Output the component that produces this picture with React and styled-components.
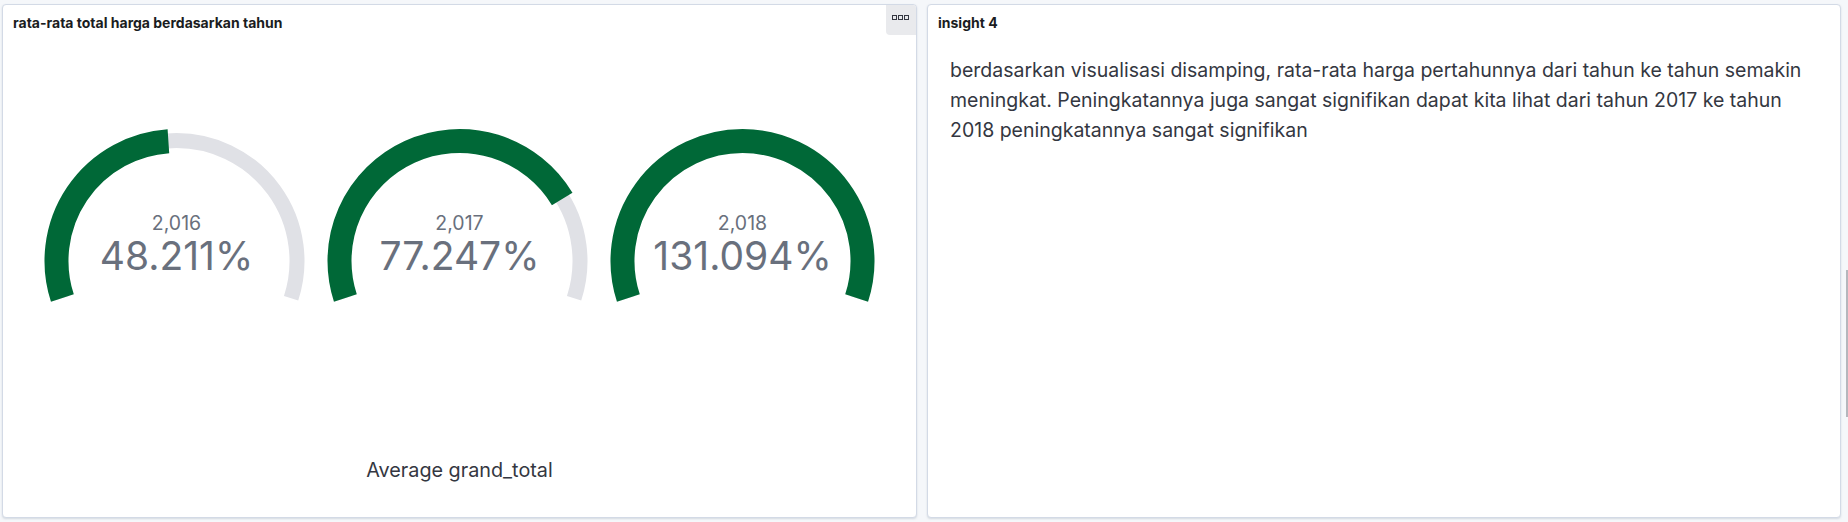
import styled, { createGlobalStyle } from "styled-components";

const GlobalStyle = createGlobalStyle`
  html, body {
    margin: 0;
    padding: 0;
    background: #f5f7fa;
    font-family: "Inter", "Noto Sans", sans-serif;
  }
  #root {
    height: 522px;
  }
`;

const gauges = [
  { year: "2,016", value: 48.211 },
  { year: "2,017", value: 77.247 },
  { year: "2,018", value: 131.094 },
];

const MIN_ANGLE = -108;
const MAX_ANGLE = 108;

function polar(cx, cy, r, deg) {
  const rad = (deg * Math.PI) / 180;
  return [cx + r * Math.sin(rad), cy - r * Math.cos(rad)];
}

function arcPath(cx, cy, r, from, to) {
  const [x1, y1] = polar(cx, cy, r, from);
  const [x2, y2] = polar(cx, cy, r, to);
  const large = to - from > 180 ? 1 : 0;
  return `M ${x1} ${y1} A ${r} ${r} 0 ${large} 1 ${x2} ${y2}`;
}

function Gauge({ year, value }) {
  const cx = 141.5;
  const cy = 160;
  const ratio = Math.min(value / 100, 1);
  const end = MIN_ANGLE + (MAX_ANGLE - MIN_ANGLE) * ratio;
  return (
    <GaugeSvg width="283" height="210" viewBox="0 0 283 210">
      <path
        d={arcPath(cx, cy, 120.5, MIN_ANGLE, MAX_ANGLE)}
        fill="none"
        stroke="#e0e1e6"
        strokeWidth="15"
      />
      <path
        d={arcPath(cx, cy, 120, MIN_ANGLE, end)}
        fill="none"
        stroke="#006837"
        strokeWidth="24"
      />
      <text className="year" x={cx} y="129" textAnchor="middle">
        {year}
      </text>
      <text className="value" x={cx} y="169" textAnchor="middle">
        {value.toFixed(3)}%
      </text>
    </GaugeSvg>
  );
}

function BoxesIcon() {
  return (
    <svg width="20" height="8" viewBox="0 0 20 8">
      <rect x="1.5" y="1.5" width="4" height="4" fill="none" stroke="#343741" />
      <rect x="7.5" y="1.5" width="4" height="4" fill="none" stroke="#343741" />
      <rect x="13.5" y="1.5" width="4" height="4" fill="none" stroke="#343741" />
    </svg>
  );
}

export default function App() {
  return (
    <>
      <GlobalStyle />
      <Dashboard>
        <Panel>
          <PanelHeader>rata-rata total harga berdasarkan tahun</PanelHeader>
          <MenuButton>
            <BoxesIcon />
          </MenuButton>
          <ChartBody>
            <GaugeRow>
              {gauges.map((g) => (
                <Gauge key={g.year} year={g.year} value={g.value} />
              ))}
            </GaugeRow>
            <AxisLabel>Average grand_total</AxisLabel>
          </ChartBody>
        </Panel>
        <Panel>
          <PanelHeader>insight 4</PanelHeader>
          <Markdown>
            berdasarkan visualisasi disamping, rata-rata harga pertahunnya dari
            tahun ke tahun semakin meningkat. Peningkatannya juga sangat
            signifikan dapat kita lihat dari tahun 2017 ke tahun 2018
            peningkatannya sangat signifikan
          </Markdown>
        </Panel>
      </Dashboard>
      <ScrollThumb />
    </>
  );
}

const Dashboard = styled.div`
  display: grid;
  grid-template-columns: 915px 914px;
  column-gap: 10px;
  padding: 4px 7px 4px 2px;
  height: 522px;
  box-sizing: border-box;
`;

const Panel = styled.div`
  position: relative;
  display: flex;
  flex-direction: column;
  background: #ffffff;
  border: 1px solid #d3dae6;
  border-radius: 4px;
  box-shadow: 0 1px 2px rgba(152, 162, 179, 0.35);
  overflow: hidden;
  min-height: 0;
`;

const PanelHeader = styled.div`
  height: 30px;
  box-sizing: border-box;
  padding: 8px 10px 0;
  font-size: 14px;
  line-height: 20px;
  font-weight: 700;
  color: #1a1c21;
  white-space: nowrap;
`;

const MenuButton = styled.div`
  position: absolute;
  top: 0;
  right: 0;
  width: 30px;
  height: 30px;
  display: flex;
  align-items: center;
  justify-content: center;
  padding-bottom: 4px;
  box-sizing: border-box;
  background: #e9eaed;
  border-bottom-left-radius: 4px;
`;

const ChartBody = styled.div`
  flex: 1;
  display: flex;
  flex-direction: column;
  align-items: center;
  padding-top: 66px;
  padding-bottom: 35px;
`;

const GaugeRow = styled.div`
  display: flex;
  justify-content: center;
`;

const GaugeSvg = styled.svg`
  display: block;

  .year {
    font-family: "Inter", sans-serif;
    font-size: 19.5px;
    fill: #69707d;
  }

  .value {
    font-family: "Inter", sans-serif;
    font-size: 39px;
    fill: #69707d;
  }
`;

const AxisLabel = styled.div`
  margin-top: auto;
  font-size: 19.8px;
  line-height: 24px;
  color: #343741;
`;

const Markdown = styled.div`
  padding: 20px 16px 0 22px;
  font-size: 19.5px;
  line-height: 30px;
  color: #343741;
`;

const ScrollThumb = styled.div`
  position: absolute;
  top: 270px;
  right: 0;
  width: 2px;
  height: 147px;
  background: #b5b7bd;
`;
